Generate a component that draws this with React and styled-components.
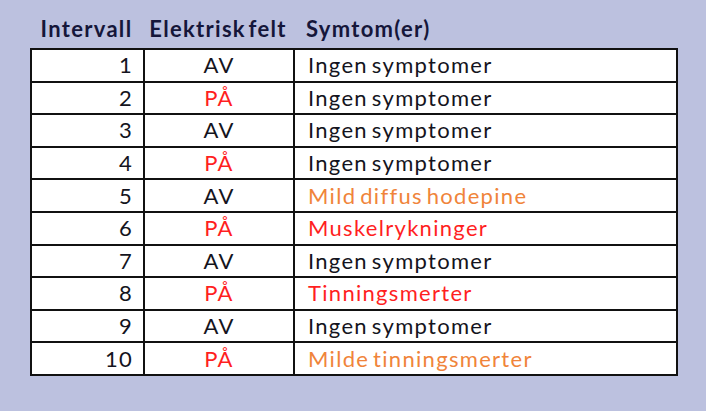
import React from 'react'
import styled, { createGlobalStyle } from 'styled-components'

const rows = [
  { n: 1, felt: 'AV', symptom: 'Ingen symptomer', tone: 'none' },
  { n: 2, felt: 'PÅ', symptom: 'Ingen symptomer', tone: 'none' },
  { n: 3, felt: 'AV', symptom: 'Ingen symptomer', tone: 'none' },
  { n: 4, felt: 'PÅ', symptom: 'Ingen symptomer', tone: 'none' },
  { n: 5, felt: 'AV', symptom: 'Mild diffus hodepine', tone: 'mild' },
  { n: 6, felt: 'PÅ', symptom: 'Muskelrykninger', tone: 'strong' },
  { n: 7, felt: 'AV', symptom: 'Ingen symptomer', tone: 'none' },
  { n: 8, felt: 'PÅ', symptom: 'Tinningsmerter', tone: 'strong' },
  { n: 9, felt: 'AV', symptom: 'Ingen symptomer', tone: 'none' },
  { n: 10, felt: 'PÅ', symptom: 'Milde tinningsmerter', tone: 'mild' },
]

const toneColors = {
  none: '#141420',
  mild: '#f0843a',
  strong: '#ff1f1f',
}

const App = () => {
  return (
    <>
      <GlobalStyle />
      <Page>
        <Header>
          <HeadCell $align="center">Intervall</HeadCell>
          <HeadCell $align="center">Elektrisk felt</HeadCell>
          <HeadCell $align="left">Symtom(er)</HeadCell>
        </Header>
        <Table>
          <colgroup>
            <col style={{ width: 113 }} />
            <col style={{ width: 150 }} />
            <col style={{ width: 383 }} />
          </colgroup>
          <tbody>
            {rows.map((row) => (
              <Row key={row.n}>
                <NumCell>{row.n}</NumCell>
                <FeltCell $on={row.felt === 'PÅ'}>{row.felt}</FeltCell>
                <SymptomCell $tone={row.tone}>{row.symptom}</SymptomCell>
              </Row>
            ))}
          </tbody>
        </Table>
      </Page>
    </>
  )
}

export default App

const GlobalStyle = createGlobalStyle`
  html, body {
    margin: 0;
    padding: 0;
    background: #bcc1df;
  }
  body {
    font-family: Lato, "Liberation Sans", sans-serif;
  }
`

const Page = styled.div`
  width: 706px;
  height: 411px;
  box-sizing: border-box;
  padding: 8px 0 0 30px;
  background: #bcc1df;
`

const Header = styled.div`
  display: grid;
  grid-template-columns: 113px 150px 383px;
  height: 40px;
  align-items: center;
  width: 646px;
`

const HeadCell = styled.div`
  font-weight: 700;
  font-size: 22px;
  letter-spacing: 1.3px;
  word-spacing: -4px;
  color: #15163a;
  text-align: ${(p) => p.$align};
  padding-left: ${(p) => (p.$align === 'left' ? '13px' : '0')};
`

const Table = styled.table`
  border-collapse: collapse;
  width: 646px;
  background: #fff;
  border: 2px solid #111;
  table-layout: fixed;
`

const Row = styled.tr`
  height: 32.6px;
`

const Cell = styled.td`
  border: 2px solid #111;
  padding: 0;
  font-size: 22px;
  letter-spacing: 1.3px;
  word-spacing: -3px;
  line-height: 1;
  white-space: nowrap;
`

const NumCell = styled(Cell)`
  text-align: right;
  padding-right: 10px;
  color: #141420;
`

const FeltCell = styled(Cell)`
  text-align: center;
  color: ${(p) => (p.$on ? '#ff1f1f' : '#141420')};
`

const SymptomCell = styled(Cell)`
  text-align: left;
  padding-left: 13px;
  color: ${(p) => toneColors[p.$tone]};
`
